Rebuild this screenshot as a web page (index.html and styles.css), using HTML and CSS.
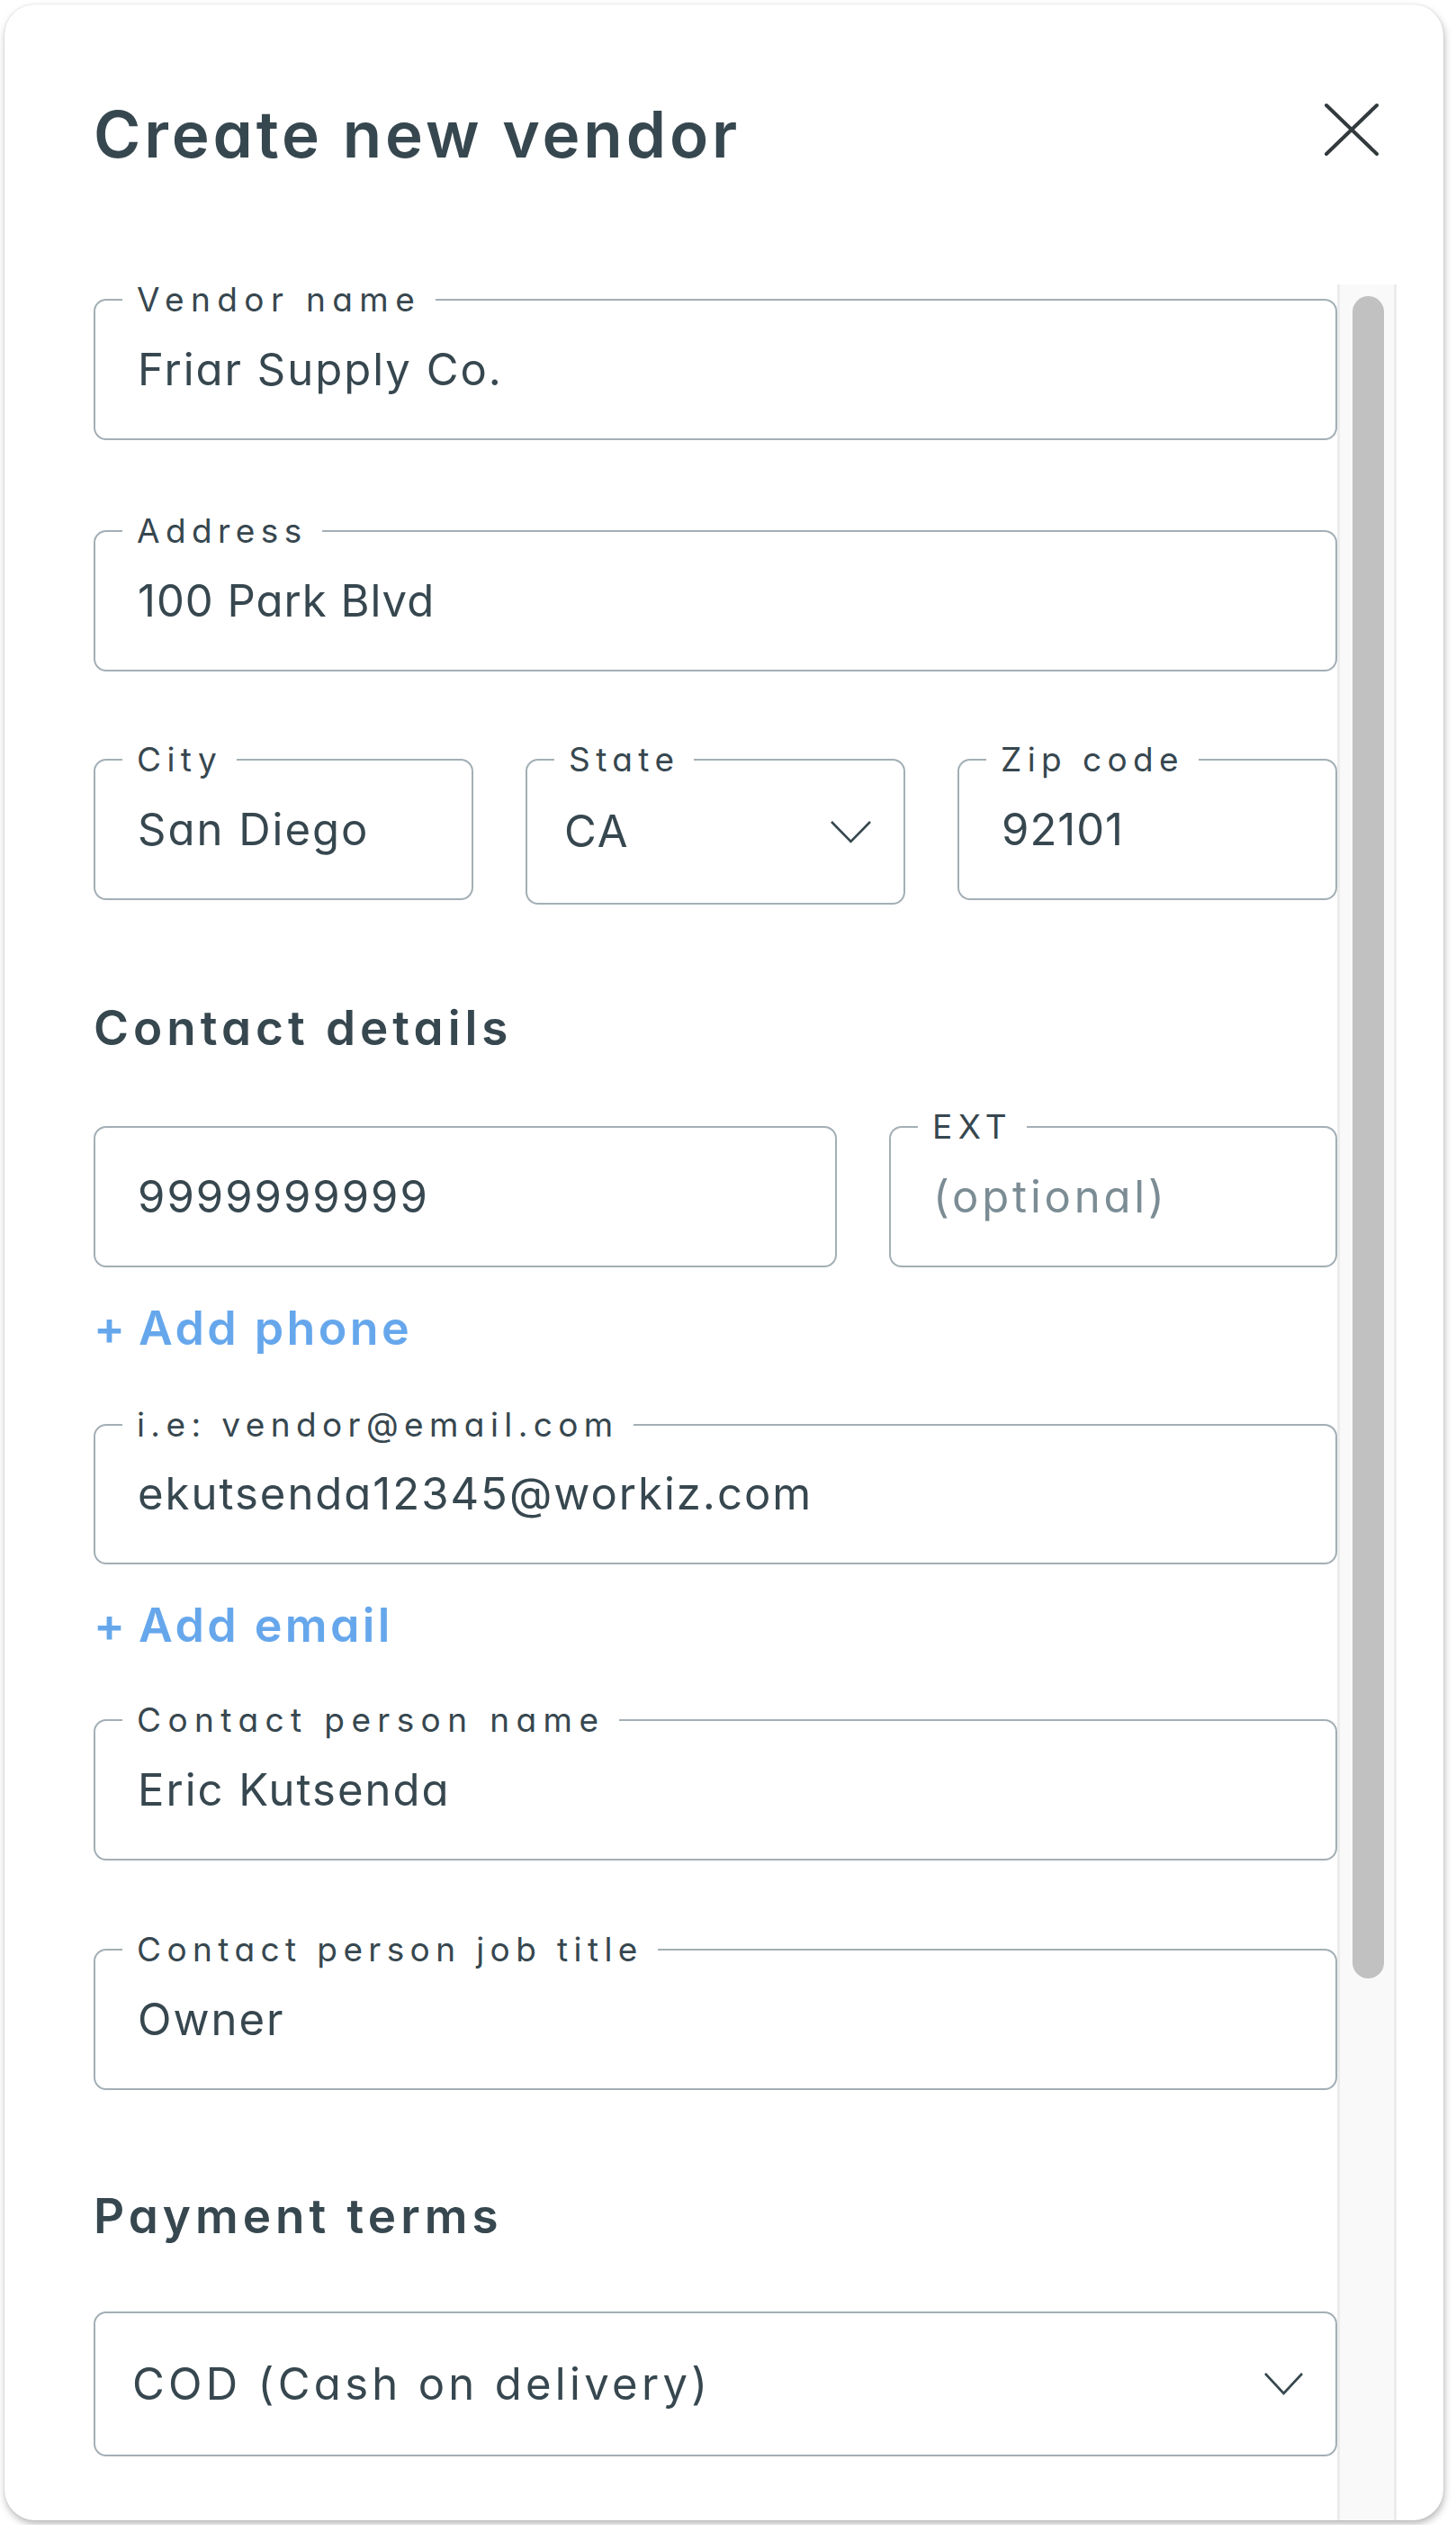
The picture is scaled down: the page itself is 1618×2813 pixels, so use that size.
FILE: index.html
```html
<!DOCTYPE html>
<html lang="en">
<head>
<meta charset="utf-8">
<title>Create new vendor</title>
<link rel="stylesheet" href="styles.css">
</head>
<body>
<div class="modal">
  <header class="modal-header">
    <h1 class="modal-title">Create new vendor</h1>
    <button class="close-btn" type="button" aria-label="Close">
      <svg width="62" height="60" viewBox="0 0 62 60" aria-hidden="true">
        <path d="M3 3 L59 57 M59 3 L3 57" stroke="#333a3d" stroke-width="4" stroke-linecap="round" fill="none"/>
      </svg>
    </button>
  </header>
  <div class="modal-body">
    <form class="form">
      <div class="field">
        <span class="field-label label-wide">Vendor name</span>
        <span class="field-value">Friar Supply Co.</span>
      </div>
      <div class="field gap-100">
        <span class="field-label">Address</span>
        <span class="field-value value-tight">100 Park Blvd</span>
      </div>
      <div class="row-3 gap-97">
        <div class="field">
          <span class="field-label">City</span>
          <span class="field-value">San Diego</span>
        </div>
        <div class="field select select-state">
          <span class="field-label">State</span>
          <span class="field-value">CA</span>
          <svg class="chevron" width="47" height="27" viewBox="0 0 47 27" aria-hidden="true"><path d="M2 2 L23.5 24 L45 2" stroke="#37474f" stroke-width="2.6" fill="none"/></svg>
        </div>
        <div class="field">
          <span class="field-label">Zip code</span>
          <span class="field-value value-tight">92101</span>
        </div>
      </div>

      <h2 class="section-title gap-107">Contact details</h2>

      <div class="row-phone gap-79">
        <div class="field">
          <span class="field-value">9999999999</span>
        </div>
        <div class="field">
          <span class="field-label">EXT</span>
          <span class="field-value placeholder">(optional)</span>
        </div>
      </div>
      <div class="add-link gap-38"><span class="plus">+</span><span>Add phone</span></div>

      <div class="field field-email gap-76">
        <span class="field-label">i.e: vendor@email.com</span>
        <span class="field-value">ekutsenda12345@workiz.com</span>
      </div>
      <div class="add-link gap-38"><span class="plus">+</span><span>Add email</span></div>

      <div class="field gap-74">
        <span class="field-label label-wide">Contact person name</span>
        <span class="field-value">Eric Kutsenda</span>
      </div>
      <div class="field gap-98">
        <span class="field-label">Contact person job title</span>
        <span class="field-value">Owner</span>
      </div>

      <h2 class="section-title gap-110">Payment terms</h2>

      <div class="field select select-terms gap-76">
        <span class="field-value">COD (Cash on delivery)</span>
        <svg class="chevron" width="45" height="27" viewBox="0 0 45 27" aria-hidden="true"><path d="M2 2 L22.5 24 L43 2" stroke="#37474f" stroke-width="2.6" fill="none"/></svg>
      </div>
    </form>
    <div class="scrollbar" aria-hidden="true"><div class="scroll-thumb"></div></div>
  </div>
</div>
</body>
</html>
```

FILE: styles.css
```css
* { box-sizing: border-box; }

html, body {
  margin: 0;
  padding: 0;
  background: #ffffff;
}

body {
  font-family: "Inter", "Noto Sans", "Liberation Sans", sans-serif;
  font-feature-settings: "cv11" 1;
  color: #37474f;
}

.modal {
  margin: 5px;
  width: 1599px;
  height: 2795px;
  background: #ffffff;
  border-radius: 34px;
  box-shadow: 1px 4px 9px rgba(0, 0, 0, 0.28), 0 0 2px rgba(0, 0, 0, 0.12);
  overflow: hidden;
  display: flex;
  flex-direction: column;
}

.modal-header {
  display: flex;
  justify-content: space-between;
  align-items: flex-start;
  padding: 109px 71px 0 99px;
  flex: 0 0 auto;
}

.modal-title {
  margin: 0;
  font-size: 71px;
  line-height: 70px;
  font-weight: 600;
  letter-spacing: 3.9px;
  color: #37474f;
}

.close-btn {
  margin: 0;
  padding: 0;
  border: 0;
  background: transparent;
  display: block;
  line-height: 0;
}

.modal-body {
  flex: 1 1 auto;
  min-height: 0;
  display: flex;
  margin-top: 132px;
  padding: 0 51px 0 99px;
}

.form {
  width: 1382px;
  flex: 0 0 1382px;
  padding-top: 16px;
  display: flex;
  flex-direction: column;
}

.scrollbar {
  width: 66px;
  flex: 0 0 66px;
  background: #f9f9f9;
  border-left: 3px solid #ececec;
  border-right: 3px solid #ececec;
  padding: 13px 0 0 14px;
}

.scroll-thumb {
  width: 35px;
  height: 1869px;
  border-radius: 18px;
  background: #c1c1c1;
}

/* spacing */
.gap-38 { margin-top: 38px; }
.gap-74 { margin-top: 74px; }
.gap-76 { margin-top: 76px; }
.gap-79 { margin-top: 79px; }
.gap-97 { margin-top: 97px; }
.gap-98 { margin-top: 98px; }
.gap-100 { margin-top: 100px; }
.gap-107 { margin-top: 107px; }
.gap-110 { margin-top: 110px; }

/* outlined field */
.field {
  position: relative;
  height: 157px;
  border: 2px solid #a3afb5;
  border-radius: 14px;
  display: flex;
  align-items: center;
  padding: 0 30px 0 47px;
}

.field-email { height: 156px; }

.field-label {
  position: absolute;
  top: -19px;
  left: 30px;
  padding: 0 16px;
  background: #ffffff;
  font-size: 37px;
  line-height: 36px;
  letter-spacing: 6.4px;
  color: #37474f;
  white-space: nowrap;
}

.label-wide { letter-spacing: 7.4px; }

.field-value {
  font-size: 49px;
  line-height: 56px;
  letter-spacing: 2px;
  color: #37474f;
  white-space: nowrap;
}

.value-tight { letter-spacing: 1px; }

.placeholder { color: #7b8c94; letter-spacing: 3.8px; }

.select {
  padding: 0 35px 0 41px;
}

.select-terms .field-value { letter-spacing: 4.3px; }

.select .chevron {
  margin-left: auto;
  flex: 0 0 auto;
}

.select-state { height: 162px; }
.select-terms { height: 161px; }

.row-3 {
  display: grid;
  grid-template-columns: 422px 422px 422px;
  column-gap: 58px;
  align-items: start;
}

.row-phone {
  display: grid;
  grid-template-columns: 826px 498px;
  column-gap: 58px;
  align-items: start;
}

.section-title {
  margin-bottom: 0;
  font-size: 53px;
  line-height: 60px;
  font-weight: 600;
  letter-spacing: 5px;
  color: #37474f;
}

.add-link {
  display: flex;
  align-items: baseline;
  column-gap: 15px;
  font-size: 52px;
  line-height: 60px;
  font-weight: 600;
  letter-spacing: 3.4px;
  color: #66a7ec;
}

.plus { letter-spacing: 0; }
```
